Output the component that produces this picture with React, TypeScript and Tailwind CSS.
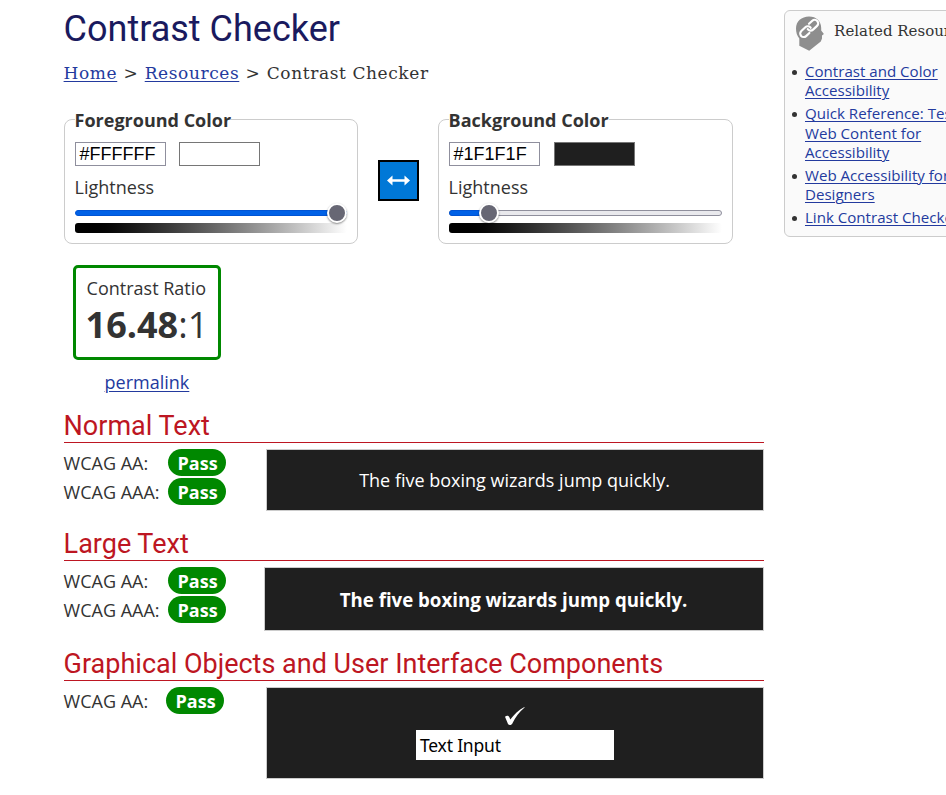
import type { ReactNode } from "react";

const link = "text-[#233a9e] underline decoration-1 underline-offset-2";

function Slider({ wide = false }: { wide?: boolean }) {
  return (
    <div className="relative mt-[11px] h-[6px] w-full">
      {wide ? (
        <>
          <div className="h-[6px] w-full rounded-[3px] border border-[#8f8f9d] bg-[#e9e9ed]" />
          <div className="absolute left-0 top-0 h-[6px] w-[40px] rounded-l-[3px] border border-[#0054d4] bg-[#0061e6]" />
          <div className="absolute -top-[7px] left-[30px] size-[20px] rounded-full border-2 border-white bg-[#676774] shadow-[0_1px_2px_rgba(0,0,0,0.45)]" />
        </>
      ) : (
        <>
          <div className="h-[6px] w-full rounded-[3px] border border-[#0054d4] bg-[#0061e6]" />
          <div className="absolute -top-[7px] right-0 size-[20px] rounded-full border-2 border-white bg-[#676774] shadow-[0_1px_2px_rgba(0,0,0,0.45)]" />
        </>
      )}
    </div>
  );
}

function ColorBox({ title, value, wide = false }: { title: string; value: string; wide?: boolean }) {
  return (
    <section className={`relative h-[125px] rounded-[8px] border border-[#ccc] px-[10px] ${wide ? "w-[295px]" : "w-[294px]"}`}>
      <h3 className="absolute -top-[12px] left-[10px] h-[24px] bg-white text-[18px] font-bold leading-[24px] whitespace-nowrap">{title}</h3>
      <div className={`flex pt-[22px] ${wide ? "gap-[14px]" : "gap-[13px]"}`}>
        <div className="h-[24px] w-[91px] border border-[#8f8f9d] pl-[4px] font-['Liberation_Sans',Arial,sans-serif] text-[18px] leading-[22px] text-black">{value}</div>
        <div className={`h-[24px] w-[81px] border border-[#767676] ${wide ? "bg-[#1f1f1f]" : "bg-white"}`} />
      </div>
      <div className="mt-[9px] h-[24px] text-[18px] leading-[24px]">Lightness</div>
      <Slider wide={wide} />
      <div className="mt-[7px] h-[10px] rounded-[3px] bg-linear-to-r from-black to-white" />
    </section>
  );
}

function Heading({ children }: { children: ReactNode }) {
  return <h2 className="h-[35px] border-b border-[#bd1622] font-['Roboto',sans-serif] text-[27px] leading-[36px] text-[#bd1622] whitespace-nowrap">{children}</h2>;
}

function Grade({ level, narrow = false }: { level: string; narrow?: boolean }) {
  return (
    <div className="flex h-[29px] items-start">
      <span className={`text-[18px] leading-[28px] whitespace-nowrap ${narrow ? "w-[102px]" : "w-[104px]"}`}>{level}</span>
      <span className="h-[27px] w-[58px] rounded-[14px] bg-[#008800] pl-[2px] text-center text-[18px] font-bold leading-[28px] text-white">Pass</span>
    </div>
  );
}

const resources: string[][] = [
  ["Contrast and Color", "Accessibility"],
  ["Quick Reference: Testing", "Web Content for", "Accessibility"],
  ["Web Accessibility for", "Designers"],
  ["Link Contrast Checker"],
];

export default function App() {
  return (
    <div className="flex h-[795px] w-[946px] items-start overflow-hidden bg-white pl-[63.6px] font-['Open_Sans',sans-serif] text-[#333]">
      <main className="w-[700px] shrink-0">
        <h1 className="h-[60px] pt-[9px] font-['Roboto',sans-serif] text-[36px] leading-[41px] text-[#1a1a5e] whitespace-nowrap">Contrast Checker</h1>
        <nav className="flex h-[24px] gap-[6.3px] font-['DejaVu_Serif',serif] text-[17px] leading-[26px] tracking-[0.6px] whitespace-nowrap">
          <a className={link}>Home</a>
          <span>&gt;</span>
          <a className={link}>Resources</a>
          <span>&gt;</span>
          <span>Contrast Checker</span>
        </nav>
        <div className="mt-[35px] flex h-[125px]">
          <ColorBox title="Foreground Color" value="#FFFFFF" />
          <button className="mt-[41px] ml-[20px] mr-[19px] flex size-[41px] shrink-0 items-center justify-center border-2 border-black bg-[#0078d7]">
            <svg width="23" height="11" viewBox="0 0 23 11" fill="#fff">
              <path d="M0 5.5 5.5.5V4.2H17.5V.5L23 5.5 17.5 10.5V6.8H5.5V10.5Z" />
            </svg>
          </button>
          <ColorBox title="Background Color" value="#1F1F1F" wide />
        </div>
        <div className="mt-[21px] ml-[9px] h-[95px] w-[148px] rounded-[5px] border-3 border-[#008800] pl-[11px] whitespace-nowrap">
          <div className="pt-[8px] text-[18px] leading-[24px]">Contrast Ratio</div>
          <div className="-ml-[1px] text-[36px] leading-[50px]"><b>16.48</b>:1</div>
        </div>
        <div className="ml-[41px] mt-[10px] h-[25px] text-[18px] leading-[25px]"><a className={link}>permalink</a></div>
        <div className="mt-[13px]"><Heading>Normal Text</Heading></div>
        <div className="mt-[6px] flex h-[62px] justify-between">
          <div><Grade level="WCAG AA:" /><Grade level="WCAG AAA:" /></div>
          <div className="h-[62px] w-[498px] border border-[#ccc] bg-[#1f1f1f] text-center text-[18px] leading-[60px] text-white">The five boxing wizards jump quickly.</div>
        </div>
        <div className="mt-[15px]"><Heading>Large Text</Heading></div>
        <div className="mt-[6px] flex h-[64px] justify-between">
          <div><Grade level="WCAG AA:" /><Grade level="WCAG AAA:" /></div>
          <div className="h-[64px] w-[500px] border border-[#ccc] bg-[#1f1f1f] text-center text-[18.67px] font-bold leading-[63px] text-white">The five boxing wizards jump quickly.</div>
        </div>
        <div className="mt-[15px]"><Heading>Graphical Objects and User Interface Components</Heading></div>
        <div className="mt-[6px] flex h-[92px] justify-between">
          <Grade level="WCAG AA:" narrow />
          <div className="flex h-[92px] w-[498px] flex-col items-center border border-[#ccc] bg-[#1f1f1f]">
            <svg className="mt-[19px] h-[20px] w-[20px]" viewBox="0 0 20 20" fill="#fff">
              <path d="M0 9.8C1.8 8 3.8 8.4 4.5 10.6L5.3 12.6C9 7.6 13.5 2.8 19.4 0L19.6.5C14.2 5 10.4 10 7.6 16 6.6 18.4 4 18.6 3 17Z" />
            </svg>
            <div className="mt-[3px] h-[30px] w-[198px] bg-white pl-[4.4px] font-['Noto_Sans',sans-serif] text-[17.5px] leading-[31px] tracking-[-0.2px] text-black">Text Input</div>
          </div>
        </div>
      </main>
      <aside className="ml-[20px] mt-[10px] h-[227px] w-[220px] shrink-0 rounded-[6px] border border-[#ccc] bg-[#fafafa] whitespace-nowrap">
        <div className="flex h-[51px] pl-[10px] pt-[5px]">
          <svg width="30" height="36" viewBox="0 0 30 36">
            <path d="M14 .6C21.5.6 26.2 5.5 26.2 12V14.5L28.9 18 27 19.5V22.5L25.8 25.5 14.2 34.8 4.3 29.7V22.5C2 19.5 1 16.5 1 12.5 1 5.5 6.5.6 14 .6Z" fill="#8e8e8e" />
            <g fill="none" stroke="#fff" strokeWidth="2.2" strokeLinecap="round" transform="translate(14.2 12.4) rotate(-43)">
              <path d="M-3 3.5H-7.5A3.5 3.5 0 0 1-7.5-3.5H-2A3.5 3.5 0 0 1 1.5.5" />
              <path d="M3-3.5H7.5A3.5 3.5 0 0 1 7.5 3.5H2A3.5 3.5 0 0 1-1.5-.5" />
            </g>
          </svg>
          <h2 className="ml-[9.5px] pt-[2px] font-['DejaVu_Serif',serif] text-[15px] leading-[26px]">Related Resources</h2>
        </div>
        <ul className="pl-[20.4px] text-[15.1px] leading-[19.35px]">
          {resources.map((lines) => (
            <li key={lines[0]} className="relative mb-[3.6px]">
              <span className="absolute -left-[13.4px] top-[8px] size-[5px] rounded-full bg-[#333]" />
              {lines.map((line) => <a key={line} className={`block ${link}`}>{line}</a>)}
            </li>
          ))}
        </ul>
      </aside>
    </div>
  );
}
